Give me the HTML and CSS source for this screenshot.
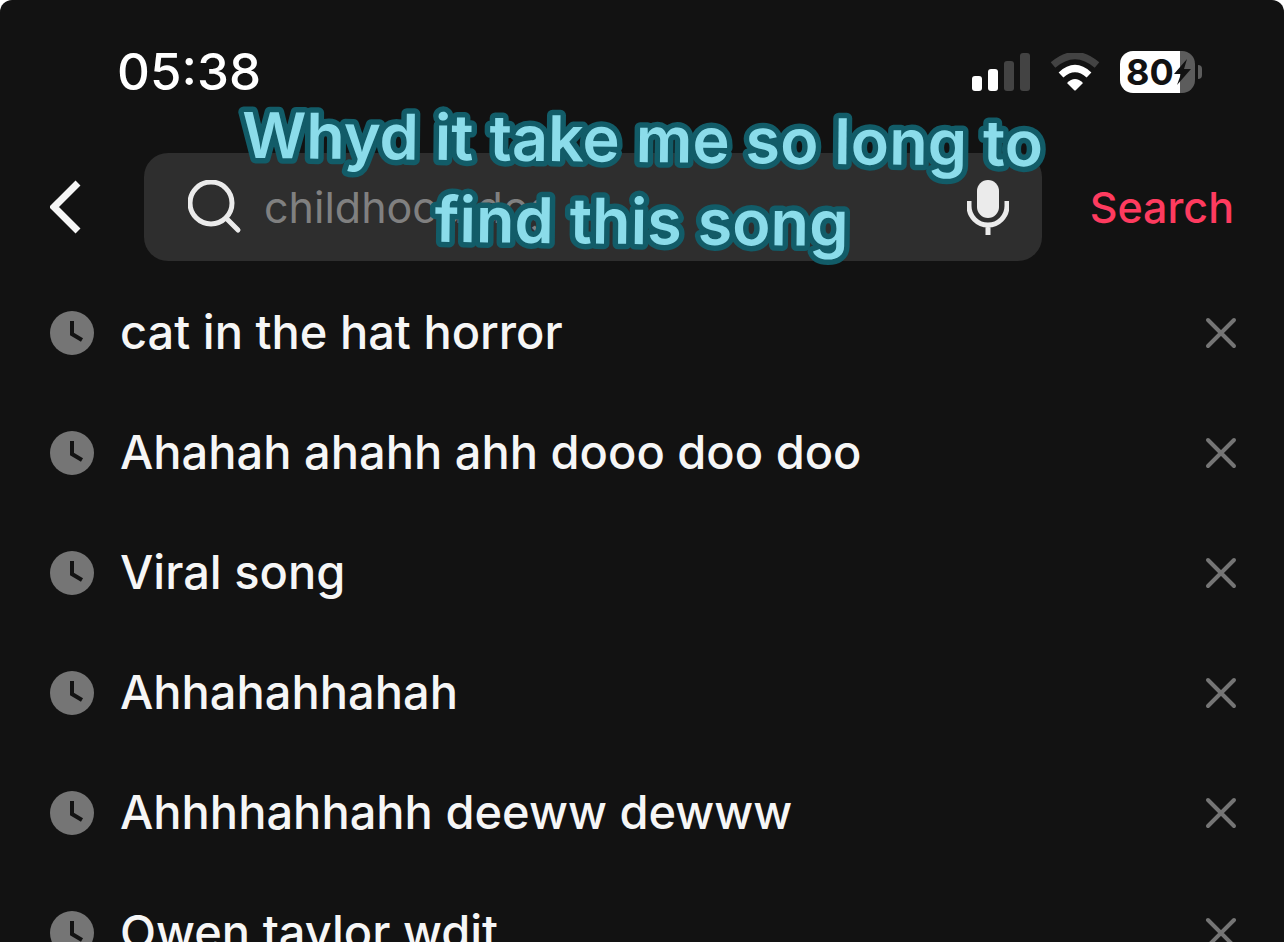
FILE: index.html
```
<!DOCTYPE html>
<html lang="en">
<head>
  <meta charset="UTF-8" />
  <title>Search</title>
  <meta name="viewport" content="width=device-width, initial-scale=1.0"/>
  <link rel="stylesheet" href="styles.css">
</head>
<body>
  <svg class="sprite" aria-hidden="true">
    <symbol id="clock" viewBox="0 0 44 44">
      <circle cx="22" cy="22" r="22" fill="#757575"/>
      <path d="M22 10v13l10 6" fill="none" stroke="#121212" stroke-width="4"/>
    </symbol>
    <symbol id="cross" viewBox="0 0 32 32">
      <path d="M3 3l26 26M29 3L3 29" fill="none" stroke="#757575" stroke-width="4" stroke-linecap="round"/>
    </symbol>
  </svg>

  <div class="screen">
    <header class="status">
      <time class="time">05:38</time>
      <div class="indicators">
        <svg width="58" height="38" viewBox="0 0 58 38">
          <rect x="0" y="23" width="10" height="15" rx="3" fill="#fff"/>
          <rect x="16" y="16" width="10" height="22" rx="3" fill="#fff"/>
          <rect x="32" y="8" width="10" height="30" rx="3" fill="#434343"/>
          <rect x="48" y="0" width="10" height="38" rx="3" fill="#434343"/>
        </svg>
        <svg class="wifi" width="50" height="38" viewBox="0 0 50 38">
          <path d="M3 12Q25-7 47 12" fill="none" stroke="#434343" stroke-width="7"/>
          <path d="M11 22Q25 9 39 22" fill="none" stroke="#fff" stroke-width="7"/>
          <path d="M17 30Q25 22 33 30L26 37Q25 38 24 37Z" fill="#fff"/>
        </svg>
        <div class="battery">
          <span class="level">80</span>
          <svg class="bolt" width="17" height="26" viewBox="0 0 17 26">
            <path d="M13 0L0 15h7L3 26 17 10H10Z" fill="#121212"/>
          </svg>
        </div>
      </div>
    </header>

    <form class="search">
      <button type="button" class="back" aria-label="Back">
        <svg width="32" height="54" viewBox="0 0 32 54">
          <path d="M28 3L4 27l24 24" fill="none" stroke="#f6f6f6" stroke-width="7"/>
        </svg>
      </button>
      <div class="field">
        <svg width="54" height="54" viewBox="0 0 54 54">
          <circle cx="23" cy="23" r="21" fill="none" stroke="#ebebeb" stroke-width="5"/>
          <path d="M38 38l12 12" fill="none" stroke="#ebebeb" stroke-width="5" stroke-linecap="round"/>
        </svg>
        <input type="text" aria-label="Search" placeholder="childhood dog">
        <button type="button" aria-label="Voice search">
          <svg width="42" height="56" viewBox="0 0 42 56">
            <rect x="10" y="1" width="22" height="38" rx="11" fill="#ebebeb"/>
            <path d="M2 22v5a19 19 0 0 0 38 0v-5M21 46v10" fill="none" stroke="#ebebeb" stroke-width="5"/>
          </svg>
        </button>
      </div>
      <button type="submit" class="go">Search</button>
      <svg class="caption">
        <text x="50%" y="63">Whyd it take me so long to</text>
        <text x="50%" y="145">find this song</text>
      </svg>
    </form>

    <ul class="history">
      <li>
        <svg class="clock"><use href="#clock"/></svg>
        <a href="#">cat in the hat horror</a>
        <button type="button" aria-label="Remove"><svg class="cross"><use href="#cross"/></svg></button>
      </li>
      <li>
        <svg class="clock"><use href="#clock"/></svg>
        <a href="#">Ahahah ahahh ahh dooo doo doo</a>
        <button type="button" aria-label="Remove"><svg class="cross"><use href="#cross"/></svg></button>
      </li>
      <li>
        <svg class="clock"><use href="#clock"/></svg>
        <a href="#">Viral song</a>
        <button type="button" aria-label="Remove"><svg class="cross"><use href="#cross"/></svg></button>
      </li>
      <li>
        <svg class="clock"><use href="#clock"/></svg>
        <a href="#">Ahhahahhahah</a>
        <button type="button" aria-label="Remove"><svg class="cross"><use href="#cross"/></svg></button>
      </li>
      <li>
        <svg class="clock"><use href="#clock"/></svg>
        <a href="#">Ahhhhahhahh deeww dewww</a>
        <button type="button" aria-label="Remove"><svg class="cross"><use href="#cross"/></svg></button>
      </li>
      <li>
        <svg class="clock"><use href="#clock"/></svg>
        <a href="#">Owen taylor wdit</a>
        <button type="button" aria-label="Remove"><svg class="cross"><use href="#cross"/></svg></button>
      </li>
    </ul>
  </div>
</body>
</html>
```
FILE: styles.css
```
* {
  box-sizing: border-box;
}
body {
  margin: 0;
  background: white;
  font-family: Inter, sans-serif;
  color: #f6f6f6;
}
button {
  display: flex;
  padding: 0;
  border: none;
  background: none;
  font: inherit;
  cursor: pointer;
}
svg {
  display: block;
  flex: none;
}
.sprite {
  position: absolute;
  width: 0;
  height: 0;
}
.screen {
  height: 100vh;
  overflow: hidden;
  background: #121212;
  border-radius: 12px 12px 0 0;
}

/* status bar */
.status {
  display: flex;
  justify-content: space-between;
  align-items: center;
  height: 153px;
  padding: 0 82px 10px 117px;
}
.time {
  font-size: 51px;
  line-height: 64px;
  font-weight: 500;
  color: white;
}
.indicators {
  display: flex;
  align-items: center;
  gap: 20px;
}
.battery {
  position: relative;
  display: flex;
  align-items: center;
  width: 75px;
  height: 42px;
  margin-right: 7px;
  padding-left: 6px;
  border-radius: 13px;
  background: linear-gradient(to right, white 60px, #5c5c5c 60px);
  color: #121212;
}
.battery::after {
  content: "";
  position: absolute;
  left: 78px;
  top: 14px;
  width: 4px;
  height: 14px;
  border-radius: 0 4px 4px 0;
  background: #5c5c5c;
}
.level {
  font-size: 36px;
  line-height: 42px;
  font-weight: 700;
}

/* search bar */
.search {
  position: relative;
  display: flex;
  align-items: center;
  height: 108px;
  padding: 0 50px;
}
.field {
  display: flex;
  flex: 1;
  align-items: center;
  min-width: 0;
  height: 108px;
  margin-left: 62px;
  padding: 0 33px 0 44px;
  border-radius: 24px;
  background: #2e2e2e;
}
.field input {
  flex: 1;
  min-width: 0;
  padding: 0 0 0 22px;
  border: none;
  outline: none;
  background: none;
  font: 400 43px Inter, sans-serif;
  color: #f6f6f6;
}
.field input::placeholder {
  color: #808080;
  opacity: 1;
}
.go {
  margin-left: 48px;
  font-size: 43px;
  font-weight: 500;
  color: #fe3b5f;
}
.caption {
  position: absolute;
  left: 0;
  top: -54px;
  width: 100%;
  height: 170px;
  overflow: visible;
  font-size: 63px;
  font-weight: 600;
  text-anchor: middle;
  fill: #8bdcea;
  stroke: #125c68;
  stroke-width: 11px;
  stroke-linejoin: round;
  paint-order: stroke;
  transform: rotate(0.6deg);
  pointer-events: none;
}

/* recent searches */
.history {
  margin: 12px 0 0;
  padding: 0 47px 0 50px;
  list-style: none;
}
.history li {
  display: flex;
  align-items: center;
  height: 120px;
}
.history a {
  flex: 1;
  margin-left: 26px;
  padding-bottom: 4px;
  font-size: 47px;
  font-weight: 500;
  color: #f6f6f6;
  text-decoration: none;
}
.clock {
  width: 44px;
  height: 44px;
}
.cross {
  width: 32px;
  height: 32px;
}
```
